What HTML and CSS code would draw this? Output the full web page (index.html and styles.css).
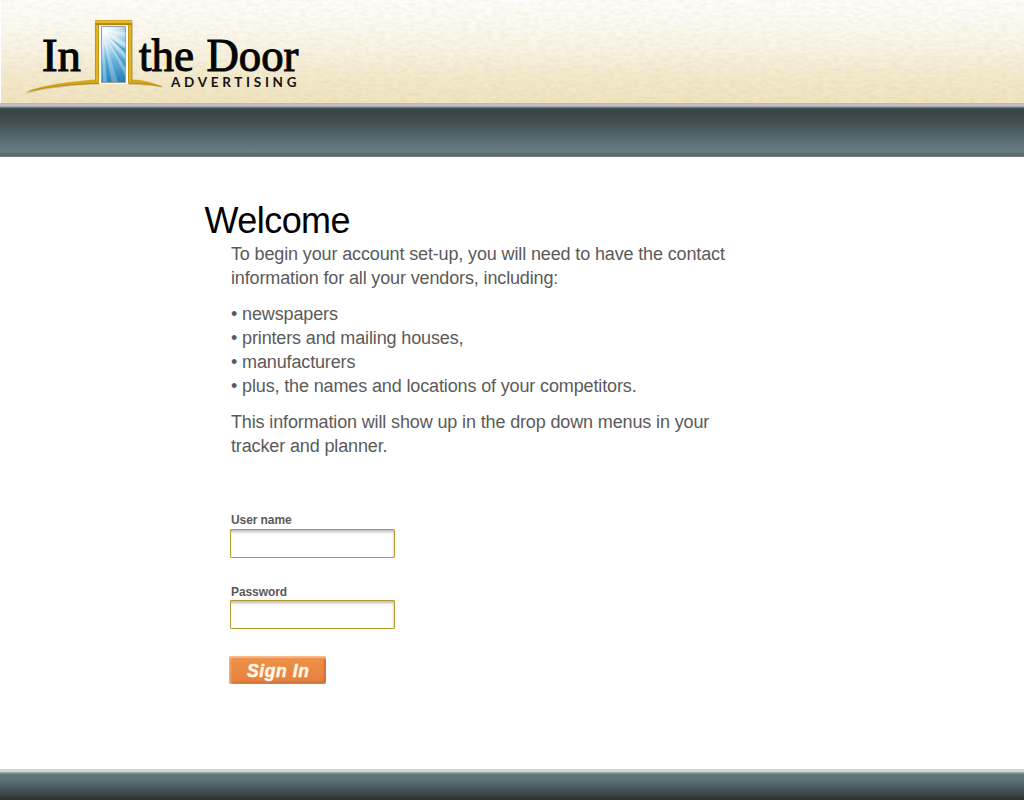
FILE: index.html
```html
<!DOCTYPE html>
<html lang="en">
<head>
<meta charset="utf-8">
<title>In the Door Advertising</title>
<link rel="stylesheet" href="styles.css">
</head>
<body>
<header class="masthead">
  <svg class="header-art" width="1024" height="103" viewBox="0 0 1024 103" role="img" aria-label="In the Door Advertising">
    <defs>
      <filter id="paper" x="0" y="0" width="100%" height="100%" color-interpolation-filters="sRGB">
        <feTurbulence type="fractalNoise" baseFrequency="0.13 0.32" numOctaves="2" seed="8"/>
        <feColorMatrix values="0 0 0 0 .52  0 0 0 0 .46  0 0 0 0 .3  .7 0 0 0 -.24"/>
      </filter>
      <linearGradient id="gold" x1="0" x2="1"><stop offset="0" stop-color="#b98700"/><stop offset=".5" stop-color="#ecc235"/><stop offset="1" stop-color="#bd8b08"/></linearGradient>
      <linearGradient id="goldTop" x1="0" x2="0" y1="0" y2="1"><stop offset="0" stop-color="#c79a14"/><stop offset=".35" stop-color="#efca42"/><stop offset=".75" stop-color="#a87700"/><stop offset="1" stop-color="#d9ad28"/></linearGradient>
      <radialGradient id="sky" gradientUnits="userSpaceOnUse" cx="104" cy="31" r="56"><stop offset="0" stop-color="#fff"/><stop offset=".25" stop-color="#cfe6f4"/><stop offset=".55" stop-color="#6ab4da"/><stop offset="1" stop-color="#1a79b4"/></radialGradient>
      <clipPath id="pane"><path d="M102 27H125.500V82H102Z"/></clipPath>
      <filter id="soft"><feGaussianBlur stdDeviation=".6"/></filter>
    </defs>
    <rect width="1024" height="103" filter="url(#paper)" opacity=".2"/>
    <path d="M26 91.500C45 84.500 70 82.500 95 80.500L95 20.500H132V80.500C144 80.500 154 83 162 86.800C151 84.500 142 84 128 83.800V24H99V83.500C74 84 47 87 26 92.500Z" fill="#8d7434" opacity=".35" transform="translate(1 1)"/>
    <path d="M26.500 91.500C46 84 71 81.500 96 79.500L99 80.500V83.500C73 84.500 49 86.500 26.500 92Z" fill="#d5a51b"/>
    <path d="M128 79.500H132C144 80 155 83 163 86.800C151 84.200 141 83.800 128 83.500Z" fill="#d5a51b"/>
    <path d="M30 91C51 86 74 84 99 83.300M128 83.300C143 83.400 153 84.600 162 86.600" fill="none" stroke="#ad7e06" stroke-width=".7"/>
    <rect x="95" y="22" width="4" height="60" fill="url(#gold)"/>
    <rect x="128" y="22" width="4" height="60" fill="url(#gold)"/>
    <rect x="95" y="20" width="37" height="5.500" fill="url(#goldTop)"/>
    <path d="M99 25.500H128V83.700H99Z" fill="#fff"/>
    <path d="M101.500 26.500H125.500V82.500H101.500Z" fill="url(#sky)" stroke="#999fa1" stroke-width="1"/>
    <g clip-path="url(#pane)" fill="#fff" filter="url(#soft)">
      <path d="M102 30L126 32V37Z" opacity=".35"/>
      <path d="M102 30L126 43V48Z" opacity=".4"/>
      <path d="M102 30L126 55V60Z" opacity=".4"/>
      <path d="M102 30L126 69V77Z" opacity=".3"/>
      <path d="M102 30L118 83H112Z" opacity=".25"/>
      <path d="M102 30L107 83H103Z" opacity=".3"/>
      <path d="M106 38L126 64V67Z" fill="#1c80bc" opacity=".4"/>
      <path d="M109 37L126 50V53Z" fill="#167bb9" opacity=".5"/>
      <path d="M104 43L111 83H108Z" fill="#2688c2" opacity=".3"/>
    </g>
    <g class="logo-type">
      <text x="42" y="71" textLength="39" lengthAdjust="spacingAndGlyphs">In</text>
      <text x="139" y="71" textLength="55" lengthAdjust="spacingAndGlyphs">the</text>
      <text x="206.500" y="71" textLength="92" lengthAdjust="spacingAndGlyphs">Door</text>
    </g>
    <text class="logo-tag" x="171" y="87" textLength="125.500">ADVERTISING</text>
  </svg>
</header>
<div class="nav-band"></div>
<main class="content">
  <h1>Welcome</h1>
  <div class="intro">
    <p>To begin your account set-up, you will need to have the contact<br>information for all your vendors, including:</p>
    <p>• newspapers<br>• printers and mailing houses,<br>• manufacturers<br>• plus, the names and locations of your competitors.</p>
    <p>This information will show up in the drop down menus in your<br>tracker and planner.</p>
  </div>
  <form class="login">
    <label for="user">User name</label>
    <input class="field field-user" id="user" type="text">
    <label class="label-pass" for="pass">Password</label>
    <input class="field" id="pass" type="password">
    <button class="sign-in" type="button"><svg width="97" height="28" aria-hidden="true"><text class="sign-text" x="18" y="21" textLength="62">Sign In</text></svg></button>
  </form>
</main>
<footer class="footer"></footer>
</body>
</html>
```
FILE: styles.css
```css
* { box-sizing: border-box; }
body {
  margin: 0;
  height: 800px;
  display: flex;
  flex-direction: column;
  overflow: hidden;
  background: #fff;
  color: #5a5a5a;
  font-family: "Liberation Sans", Arial, sans-serif;
}
.masthead {
  height: 103px;
  border-left: 1px solid #fff;
  background: linear-gradient(#fffefc 0, #fdfbf4 18px, #f9f4e4 48px, #f4eacd 75px, #f1e4bf 103px);
  overflow: hidden;
}
.header-art { display: block; margin-left: -1px; }
.logo-type {
  font: 47px "Liberation Serif", serif;
  fill: #050505;
  stroke: #050505;
  stroke-width: 1.1px;
}
.logo-tag { font: bold 13.5px Lato, sans-serif; fill: #151310; }
.nav-band {
  height: 54px;
  background: linear-gradient(#b5b9bc 0, #c1c3c6 3px, #858c8e 4px, #536062 5px, #384446 6px, #3c494b 14px, #4c5d61 28px, #667b80 47px, #687a7d 49px, #606b6d 51px, #60696b 53px, #858d8f 54px);
}
.content { flex: 1; padding: 43px 0 0 204px; }
h1 {
  margin: 0;
  padding-left: .5px;
  font-size: 36px;
  font-weight: 400;
  line-height: 42px;
  letter-spacing: -.55px;
  color: #000;
}
.intro { padding-left: 27px; font-size: 18px; line-height: 24px; letter-spacing: -.135px; }
.intro p { margin: 0 0 12px; white-space: nowrap; }
.login { display: flex; flex-direction: column; align-items: flex-start; padding: 42px 0 0 26px; }
label { padding-left: 1px; height: 17px; font-size: 12px; font-weight: 700; line-height: 16px; letter-spacing: -.08px; }
.label-pass { line-height: 18px; }
.field {
  width: 165px;
  height: 29px;
  margin: 0 0 27px;
  padding: 0 5px;
  border: 1px solid #b59a2d;
  border-radius: 1px;
  background: #fff;
  box-shadow: inset -1px 3px 3px -1px #bbb;
}
.field-user { margin-bottom: 25px; }
.sign-in {
  width: 97px;
  height: 28px;
  margin-left: -1px;
  padding: 0;
  border: 0;
  border-radius: 3px;
  background: linear-gradient(#ef9148, #e5803f);
  box-shadow: inset 0 2px 1px #f5b98c, inset 2px 0 2px #f0a870, inset -2px -2px 2px #cc6f34;
}
.sign-in svg { display: block; }
.sign-text { font: italic 700 17.5px "Liberation Sans", Arial, sans-serif; fill: #fff8e8; stroke: #fff8e8; stroke-width: .45px; }
.footer {
  height: 31px;
  background: linear-gradient(#d0d7d8 0, #d0d7d8 3px, #99a5a7 3px, #99a5a7 4px, #637679 5px, #5e7276 10px, #4c5c60 18px, #3a4446 26px, #303334 29px, #303233 31px);
}
```
